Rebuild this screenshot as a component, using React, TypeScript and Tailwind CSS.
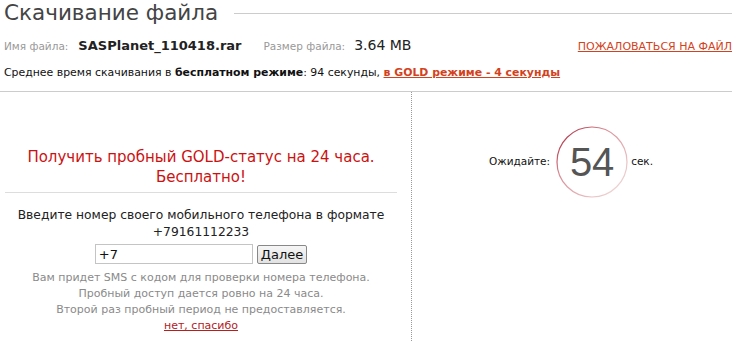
import React from 'react'

const font = "font-['DejaVu_Sans','Verdana',sans-serif]"

const Countdown: React.FC<{ value: number }> = ({ value }) => (
  <div className="relative flex h-[72px] w-[72px] items-center justify-center">
    <svg className="absolute inset-0" width="72" height="72" viewBox="0 0 72 72">
      <defs>
        <linearGradient id="ring" x1="0" y1="0" x2="1" y2="1">
          <stop offset="0%" stopColor="#a3162c" />
          <stop offset="35%" stopColor="#d98a92" />
          <stop offset="100%" stopColor="#f3e4e2" />
        </linearGradient>
      </defs>
      <circle cx="36" cy="36" r="35" fill="white" stroke="url(#ring)" strokeWidth="1.2" />
    </svg>
    <span className="relative font-['Liberation_Sans',sans-serif] text-[40px] leading-none text-[#555]">{value}</span>
  </div>
)

export default function App() {
  return (
    <div className={`${font} h-[341px] w-[740px] overflow-hidden bg-white text-[11px] text-[#111]`}>
      <div className="flex items-center pl-1 pr-2 pt-[1px]">
        <h1 className="text-[21.5px] leading-[24px] text-[#444]">Скачивание файла</h1>
        <div className="ml-4 h-px flex-1 bg-[#ccc]" />
      </div>

      <div className="mt-[10px] flex h-[20px] items-baseline pl-1 pr-2 leading-[20px]">
        <span className="text-[10.5px] text-[#999]">Имя файла:</span>
        <span className="ml-[10px] text-[13px] font-bold text-[#222]">SASPlanet_110418.rar</span>
        <span className="ml-[22px] text-[10.5px] text-[#999]">Размер файла:</span>
        <span className="ml-[9px] text-[14px] text-[#222]">3.64 MB</span>
        <a className="ml-auto text-[#d3421c] underline">ПОЖАЛОВАТЬСЯ НА ФАЙЛ</a>
      </div>

      <div className="mt-[10px] pl-1 text-[10.9px] leading-[16px]">
        Среднее время скачивания в <b>бесплатном режиме</b>: 94 секунды,{' '}
        <a className="font-bold text-[#d3421c] underline">в GOLD режиме - 4 секунды</a>
      </div>

      <div className="mr-2 mt-[10px] border-t border-[#ccc]" />

      <div className="flex h-[249px]">
        <div className="flex w-[412px] flex-col items-center border-r border-dotted border-[#999] pr-[9px] pt-[55px]">
          <div className="text-center text-[15px] leading-[20px] text-[#cc1111]">
            Получить пробный GOLD-статус на 24 часа.
            <br />
            Бесплатно!
          </div>
          <div className="ml-[5px] mt-[5px] h-px w-[392px] self-start bg-[#ddd]" />
          <div className="mt-[14px] text-center text-[12.3px] leading-[17px] text-[#222]">
            Введите номер своего мобильного телефона в формате
            <br />
            +79161112233
          </div>
          <div className="mt-[3px] flex items-center gap-[4px]">
            <input
              defaultValue="+7"
              className="h-[20px] w-[158px] border border-[#c4c4c4] px-[3px] text-[13px] text-[#111] outline-none"
            />
            <button className="h-[19px] rounded-[2px] border border-[#888] bg-gradient-to-b from-[#f6f6f6] to-[#e2e2e2] px-[3px] text-[13px] leading-none text-[#111]">
              Далее
            </button>
          </div>
          <div className="mt-[6px] text-center text-[11px] leading-[16px] text-[#8a8a8a]">
            Вам придет SMS с кодом для проверки номера телефона.
            <br />
            Пробный доступ дается ровно на 24 часа.
            <br />
            Второй раз пробный период не предоставляется.
          </div>
          <a className="text-[11px] leading-[16px] text-[#b3211e] underline">нет, спасибо</a>
        </div>

        <div className="flex flex-1 items-start justify-center pr-[10px] pt-[34px]">
          <div className="flex items-center">
            <span className="text-[10.5px] text-[#111]">Ожидайте:</span>
            <div className="ml-[6px]">
              <Countdown value={54} />
            </div>
            <span className="ml-[3px] text-[10.5px] text-[#111]">сек.</span>
          </div>
        </div>
      </div>
    </div>
  )
}
